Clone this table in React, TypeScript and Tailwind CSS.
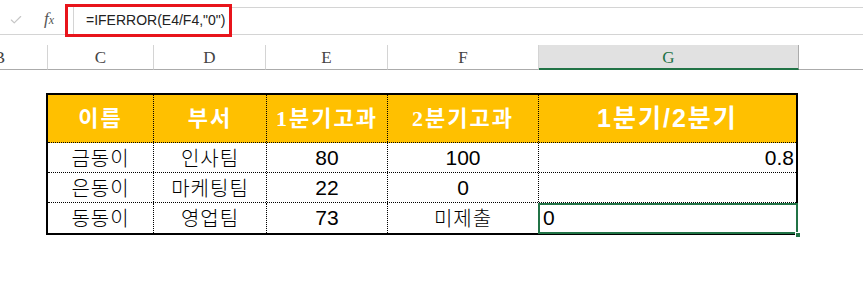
import { Check } from "lucide-react";

const kr = { fontFamily: '"Noto Sans CJK KR", sans-serif' };
const num = { fontFamily: '"Liberation Sans", "Noto Sans CJK KR", sans-serif' };
const serif = { fontFamily: '"Liberation Serif", "Noto Sans CJK KR", serif' };

const cols = ["w-[106px]", "w-[113px]", "w-[121px]", "w-[151px]", "w-[257px]"];

const rows = [
  ["금동이", "인사팀", "80", "100", "0.8"],
  ["은동이", "마케팅팀", "22", "0", ""],
  ["동동이", "영업팀", "73", "미제출", "0"],
];

function ColHead({ label, w, active }: { label: string; w: string; active?: boolean }) {
  return (
    <div
      className={`${w} h-[25px] shrink-0 flex items-center justify-center pt-[2px] text-[17px] ${
        active
          ? "bg-[#e1e1e1] border-r border-[#ababab] border-b-2 border-b-[#217346] text-[#217346]"
          : "border-r border-[#d4d4d4] border-b border-b-[#ababab] text-[#444]"
      }`}
      style={serif}
    >
      {label}
    </div>
  );
}

export default function App() {
  return (
    <div className="w-[863px] h-[286px] bg-white overflow-hidden">
      {/* formula bar */}
      <div className="flex h-[45px] items-start">
        <div className="w-[65px] h-[35px] border-b border-[#d4d4d4] relative flex items-center">
          <Check className="ml-[9px] mt-[6px] text-[#c6c6c6]" size={14} strokeWidth={2} />
          <span className="ml-[21px] mt-[4px] italic text-[17px] text-[#555]" style={serif}>
            f<span className="text-[12px]">x</span>
          </span>
        </div>
        <div className="mt-[4px] w-[167px] h-[33px] border-[3px] border-[#e8141b] flex">
          <div className="ml-[5px] h-full border-l border-[#d4d4d4] flex items-center pl-[12px] pb-[1px] text-[14px] text-[#222] whitespace-nowrap" style={num}>
            =IFERROR(E4/F4,"0")
          </div>
        </div>
        <div className="flex-1 mt-[7px] h-[28px] border-y border-[#d4d4d4]" />
      </div>

      {/* column headers */}
      <div className="flex">
        <div className="w-[48px] h-[25px] shrink-0 flex items-center justify-end pr-[42px] pt-[2px] text-[17px] text-[#444] border-r border-[#d4d4d4] border-b border-b-[#ababab]" style={serif}>
          B
        </div>
        <ColHead label="C" w="w-[106px]" />
        <ColHead label="D" w="w-[112px]" />
        <ColHead label="E" w="w-[122px]" />
        <ColHead label="F" w="w-[151px]" />
        <ColHead label="G" w="w-[260px]" active />
        <div className="flex-1 h-[25px] border-b border-[#ababab]" />
      </div>

      {/* table */}
      <div className="mt-[23px] ml-[46px] w-[752px] border-2 border-black relative">
        <div className="flex h-[48px] bg-[#ffc000] text-white border-b border-dotted border-black">
          {["이름", "부서", "1분기고과", "2분기고과"].map((h, i) => (
            <div
              key={h}
              className={`${cols[i]} shrink-0 flex items-center justify-center border-r border-dotted border-black text-[22px] font-bold tracking-[2px] whitespace-nowrap`}
              style={serif}
            >
              {h}
            </div>
          ))}
          <div className={`${cols[4]} shrink-0 flex items-center justify-center text-[25px] font-bold tracking-[2px]`} style={num}>
            1분기/2분기
          </div>
        </div>
        {rows.map((r, ri) => (
          <div
            key={ri}
            className={`flex h-[30px] text-black ${ri < 2 ? "border-b border-dotted border-black" : ""}`}
          >
            <div className={`${cols[0]} shrink-0 flex items-center justify-center border-r border-dotted border-black text-[20px] font-light tracking-[1px]`} style={kr}>
              {r[0]}
            </div>
            <div className={`${cols[1]} shrink-0 flex items-center justify-center border-r border-dotted border-black text-[20px] font-light tracking-[1px]`} style={kr}>
              {r[1]}
            </div>
            <div className={`${cols[2]} shrink-0 flex items-center justify-center border-r border-dotted border-black text-[21px]`} style={num}>
              {r[2]}
            </div>
            <div
              className={`${cols[3]} shrink-0 flex items-center justify-center border-r border-dotted border-black ${
                ri === 2 ? "text-[20px] font-light tracking-[1px]" : "text-[21px]"
              }`}
              style={ri === 2 ? kr : num}
            >
              {r[3]}
            </div>
            <div
              className={`${cols[4]} shrink-0 flex items-center text-[21px] ${ri === 0 ? "justify-end pr-[2px]" : "justify-start pl-[4px]"}`}
              style={num}
            >
              {r[4]}
            </div>
          </div>
        ))}
        {/* active cell selection */}
        <div className="absolute left-[490px] top-[108px] w-[260px] h-[31px] border-2 border-[#217346] pointer-events-none" />
        <div className="absolute left-[747px] top-[137px] w-[6px] h-[6px] bg-[#217346] border border-white" />
      </div>
    </div>
  );
}
